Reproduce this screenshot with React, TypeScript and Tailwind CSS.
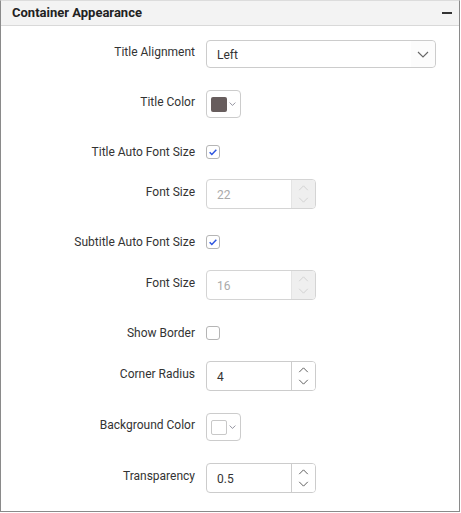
import React from "react";

const font = { fontFamily: "Roboto, 'Noto Sans', sans-serif" };

function Label({ children, up = true }: { children: React.ReactNode; up?: boolean }) {
  return (
    <div className={`w-[194px] shrink-0 text-right text-[12px] leading-[14px] text-[#333] ${up ? "pb-[5px]" : ""}`}>
      {children}
    </div>
  );
}

function Row({ mt, label, up = true, children }: { mt: string; label: string; up?: boolean; children: React.ReactNode }) {
  return (
    <div className={`flex items-center ${mt}`}>
      <Label up={up}>{label}</Label>
      <div className="ml-[11px]">{children}</div>
    </div>
  );
}

function Chevron({ className, color = "#666" }: { className?: string; color?: string }) {
  return (
    <svg className={className} viewBox="0 0 12 7" fill="none">
      <path d="M1 1l5 5 5-5" stroke={color} strokeWidth="1.1" />
    </svg>
  );
}

function ChevronUp({ className, color = "#666" }: { className?: string; color?: string }) {
  return (
    <svg className={className} viewBox="0 0 12 7" fill="none">
      <path d="M1 6l5-5 5 5" stroke={color} strokeWidth="1.1" />
    </svg>
  );
}

function Checkbox({ checked }: { checked: boolean }) {
  return (
    <div className="w-[14px] h-[14px] border border-[#b5b5b5] rounded-[3px] bg-white flex items-center justify-center">
      {checked && (
        <svg viewBox="0 0 12 12" className="w-[10px] h-[10px]" fill="none">
          <path d="M2 6.3l2.6 2.6L10 3.2" stroke="#2d55e0" strokeWidth="1.8" />
        </svg>
      )}
    </div>
  );
}

function NumInput({ value, disabled }: { value: string; disabled?: boolean }) {
  return (
    <div className={`w-[110px] h-[30px] border rounded-[4px] flex overflow-hidden ${disabled ? "border-[#d4d4d4] bg-white" : "border-[#cccccc] bg-white"}`}>
      <div className={`flex-1 pl-[10px] flex items-center text-[12px] pt-[2px] ${disabled ? "text-[#aaaaaa]" : "text-[#333]"}`}>{value}</div>
      <div className={`w-[24px] border-l flex flex-col items-center justify-center gap-[6px] ${disabled ? "border-[#e4e4e4] bg-[#efefef]" : "border-[#cccccc] bg-white"}`}>
        <ChevronUp className="w-[11px] h-[6px]" color={disabled ? "#d0d0d0" : "#555"} />
        <Chevron className="w-[11px] h-[6px]" color={disabled ? "#d0d0d0" : "#555"} />
      </div>
    </div>
  );
}

function ColorPicker({ color, white }: { color: string; white?: boolean }) {
  return (
    <div className="w-[35px] h-[28px] border border-[#cccccc] rounded-[4px] bg-white flex items-center pl-[4px]">
      <div
        className={`w-[16px] h-[15px] rounded-[2px] ${white ? "border border-[#c8c8c8]" : ""}`}
        style={{ backgroundColor: color }}
      />
      <Chevron className="w-[7px] h-[4px] ml-[2px]" color="#556" />
    </div>
  );
}

export default function App() {
  return (
    <div className="w-[461px] h-[513px] bg-white" style={font}>
      <div className="w-[460px] h-[512px] border-l border-r border-b border-t border-l-[#8a8a8a] border-r-[#8a8a8a] border-b-[#8a8a8a] border-t-[#dcdcdc] flex flex-col">
        <div className="h-[25px] shrink-0 bg-[#f3f3f3] border-b border-[#d9d9d9] flex items-center justify-between pl-[11px] pr-[7px] pb-[2px]">
          <span className="text-[13px] font-bold text-[#222] leading-none">Container Appearance</span>
          <div className="w-[10px] h-[2px] bg-[#333] mt-[1px]" />
        </div>

        <Row mt="mt-[14px]" label="Title Alignment">
          <div className="w-[230px] h-[28px] border border-[#cccccc] rounded-[4px] flex items-center justify-between pl-[10px] text-[12px] text-[#333]">
            <span className="pt-[2px]">Left</span>
            <div className="w-[24px] h-full flex items-center justify-center bg-[#fcfcfc] rounded-r-[4px]">
              <Chevron className="w-[12px] h-[7px]" color="#666" />
            </div>
          </div>
        </Row>

        <Row mt="mt-[22px]" label="Title Color">
          <ColorPicker color="#675d5d" />
        </Row>

        <Row mt="mt-[27px]" label="Title Auto Font Size" up={false}>
          <Checkbox checked />
        </Row>

        <Row mt="mt-[20px]" label="Font Size">
          <NumInput value="22" disabled />
        </Row>

        <Row mt="mt-[26px]" label="Subtitle Auto Font Size" up={false}>
          <Checkbox checked />
        </Row>

        <Row mt="mt-[21px]" label="Font Size">
          <NumInput value="16" disabled />
        </Row>

        <Row mt="mt-[26px]" label="Show Border" up={false}>
          <Checkbox checked={false} />
        </Row>

        <Row mt="mt-[21px]" label="Corner Radius">
          <NumInput value="4" />
        </Row>

        <Row mt="mt-[22px]" label="Background Color">
          <ColorPicker color="#ffffff" white />
        </Row>

        <Row mt="mt-[22px]" label="Transparency">
          <NumInput value="0.5" />
        </Row>
      </div>
    </div>
  );
}
